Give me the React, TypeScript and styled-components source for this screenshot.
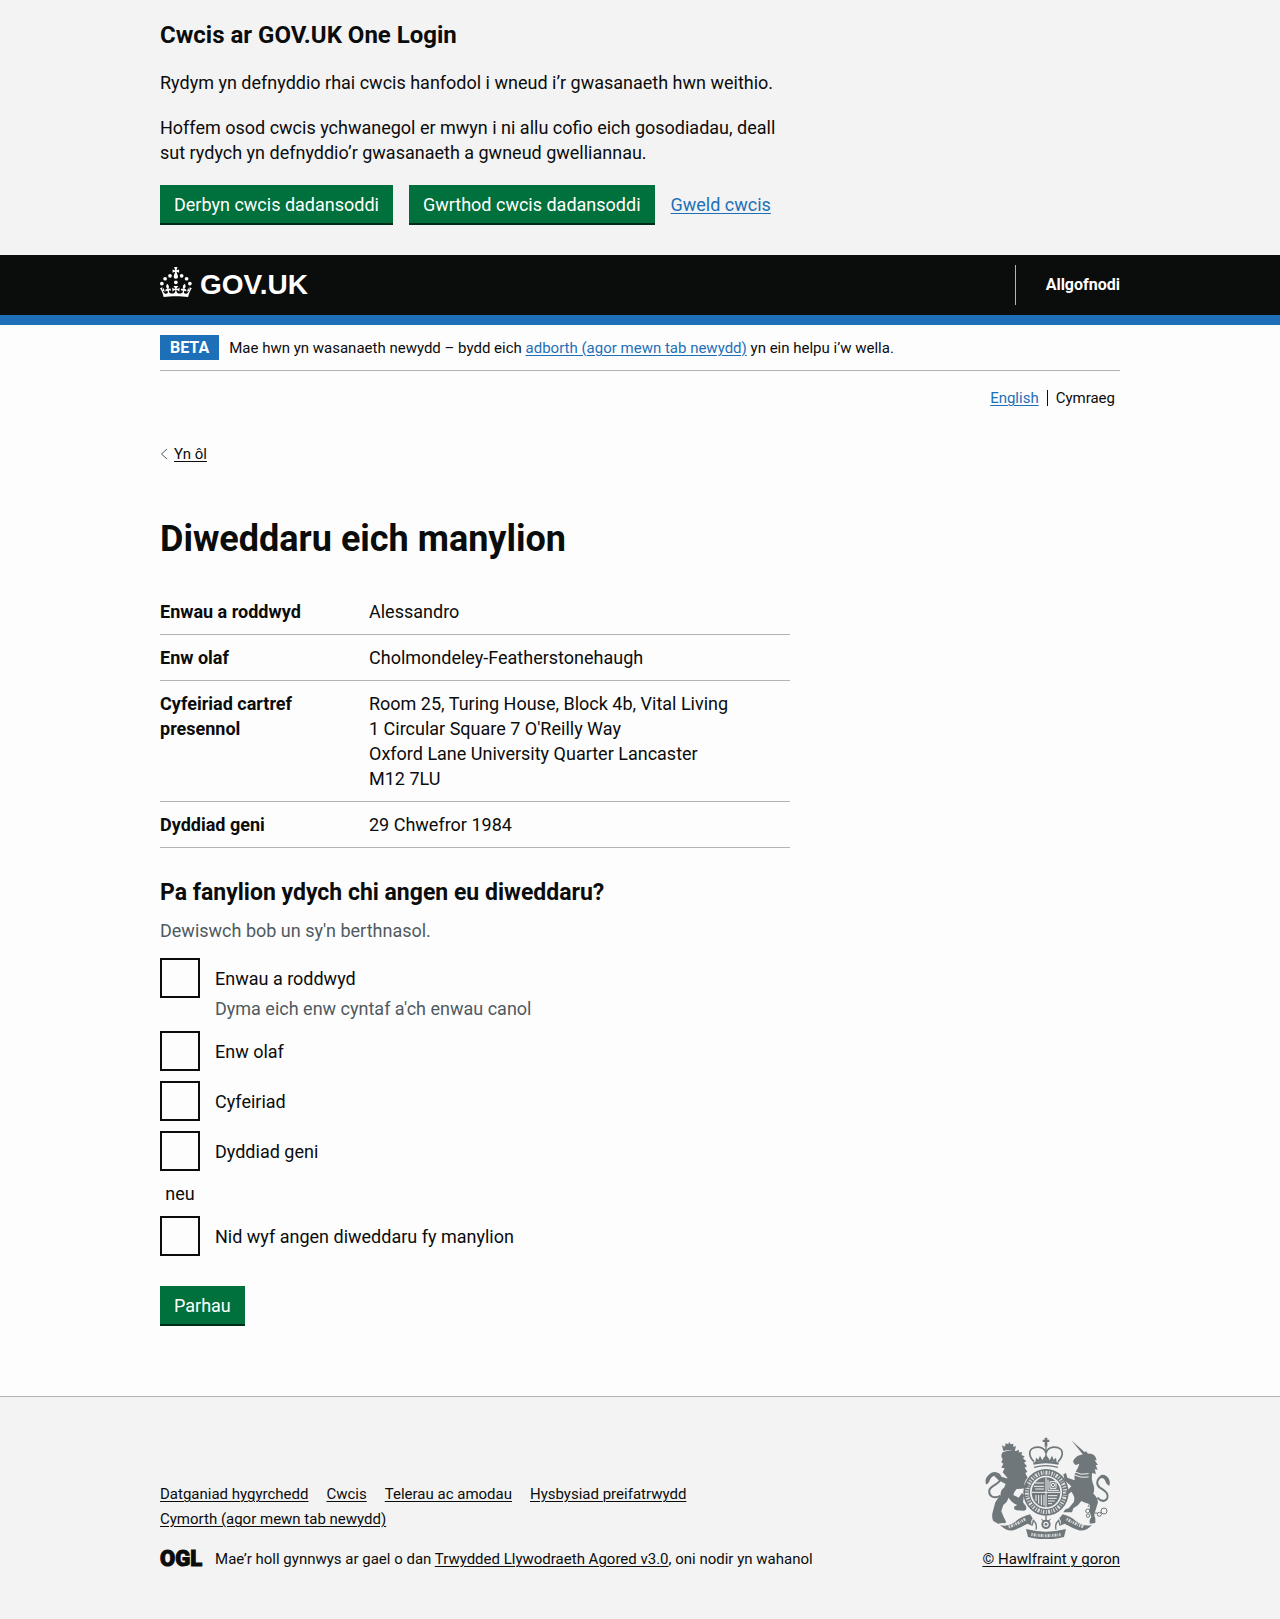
import React from 'react';
import styled, { createGlobalStyle, css } from 'styled-components';

const ink = '#0b0c0c';
const blue = '#1d70b8';
const green = '#00703c';
const rule = '#b1b4b6';
const panel = '#f3f3f3';
const muted = '#505a5f';

const GlobalStyle = createGlobalStyle`
  *, *::before, *::after { box-sizing: border-box; }
  body {
    margin: 0;
    background: #fdfdfd;
    color: ${ink};
    font-family: Roboto, "Liberation Sans", sans-serif;
    font-size: 18px;
    line-height: 25px;
  }
`;

const smallText = css`
  font-size: 15px;
  line-height: 20px;
`;

const underline = css`
  text-decoration: underline;
  text-decoration-thickness: 1px;
  text-underline-offset: 2px;
`;

const Container = styled.div`
  max-width: 960px;
  margin: 0 auto;
`;

const Column = styled.div`
  max-width: 630px;
`;

const Link = styled.a<{ $dark?: boolean }>`
  color: ${(p) => (p.$dark ? ink : blue)};
  ${underline}
`;

const Button = styled.button`
  min-height: 38px;
  padding: 0 14px;
  border: 0;
  margin-bottom: 2px;
  background: ${green};
  box-shadow: 0 2px 0 #002d18;
  color: #fff;
  font: inherit;
  cursor: pointer;
`;

/* Cookie banner */

const CookieBanner = styled.section`
  padding: 20px 0 30px;
  background: ${panel};
`;

const CookieTitle = styled.h2`
  margin: 0 0 20px;
  font-size: 24px;
  line-height: 30px;
`;

const Paragraph = styled.p`
  margin: 0 0 20px;
`;

const ButtonRow = styled.div`
  display: flex;
  align-items: baseline;
  gap: 16px;
`;

/* Header */

const Header = styled.header`
  background: ${ink};
  border-bottom: 10px solid ${blue};
`;

const HeaderRow = styled(Container)`
  display: flex;
  align-items: center;
  justify-content: space-between;
  height: 60px;
`;

const Logo = styled.a`
  display: flex;
  align-items: flex-start;
  gap: 8px;
  color: #fff;
  font: bold 28px/36px "Liberation Sans", Arial, sans-serif;
  text-decoration: none;
`;

const SignOut = styled.nav`
  display: flex;
  align-items: center;
  height: 40px;
  padding-left: 30px;
  border-left: 1px solid ${rule};
`;

const SignOutLink = styled.a`
  color: #fff;
  font-size: 16px;
  line-height: 20px;
  font-weight: 700;
  text-decoration: none;
`;

/* Phase banner and language choice */

const PhaseBanner = styled.div`
  display: flex;
  align-items: center;
  gap: 10px;
  padding: 10px 0;
  border-bottom: 1px solid ${rule};
  ${smallText}
`;

const Tag = styled.strong`
  padding: 0 10px;
  background: ${blue};
  color: #fff;
  font-size: 16px;
  line-height: 25px;
`;

const Languages = styled.ul`
  display: flex;
  justify-content: flex-end;
  align-items: center;
  gap: 8px;
  margin: 0;
  padding: 17px 5px 15px;
  list-style: none;
  ${smallText}
`;

const Language = styled.li`
  display: flex;
  align-items: center;
  gap: 8px;

  & + &::before {
    content: "";
    width: 1px;
    height: 16px;
    background: ${ink};
  }
`;

const BackRow = styled.nav`
  display: flex;
  padding-top: 21px;
`;

const BackLink = styled.a`
  display: flex;
  align-items: center;
  gap: 6px;
  color: ${ink};
  ${underline}
  ${smallText}
`;

/* Main content */

const Main = styled.main`
  padding: 55px 0 70px;
`;

const Title = styled.h1`
  margin: 0 0 30px;
  font-size: 36px;
  line-height: 40px;
`;

const Summary = styled.dl`
  margin: 0 0 30px;
`;

const SummaryRow = styled.div`
  display: grid;
  grid-template-columns: 30% 1fr;
  gap: 20px;
  padding: 10px 0;
  border-bottom: 1px solid ${rule};
`;

const Key = styled.dt`
  font-weight: 700;
`;

const Value = styled.dd`
  margin: 0;
  white-space: pre-line;
`;

const Fieldset = styled.fieldset`
  margin: 0 0 30px;
  padding: 0;
  border: 0;
`;

const Legend = styled.legend`
  margin: 0 0 10px;
  padding: 0;
  font-size: 23px;
  line-height: 30px;
  font-weight: 700;
`;

const Hint = styled.div`
  color: ${muted};
`;

const Options = styled.div`
  display: flex;
  flex-direction: column;
  gap: 10px;
  margin-top: 15px;
`;

const Option = styled.div`
  display: flex;
  gap: 15px;
`;

const Checkbox = styled.input`
  appearance: none;
  flex: none;
  width: 40px;
  height: 40px;
  margin: 0;
  border: 2px solid ${ink};
  background: transparent;
  cursor: pointer;

  &:checked {
    background: ${ink};
    box-shadow: inset 0 0 0 6px #fff;
  }
`;

const OptionText = styled.div`
  display: flex;
  flex-direction: column;
  gap: 5px;
  padding-top: 8px;
`;

const Divider = styled.div`
  width: 40px;
  text-align: center;
`;

/* Footer */

const Footer = styled.footer`
  padding: 40px 0 50px;
  border-top: 1px solid ${rule};
  background: ${panel};
  ${smallText}
`;

const FooterRow = styled(Container)`
  display: flex;
  align-items: flex-end;
  justify-content: space-between;
  gap: 30px;
`;

const FooterLinks = styled.ul`
  display: flex;
  flex-wrap: wrap;
  gap: 5px 18px;
  max-width: 720px;
  margin: 0 0 20px;
  padding: 0;
  list-style: none;
`;

const Licence = styled.div`
  display: flex;
  align-items: center;
  gap: 13px;
`;

const OglMark = styled.span`
  font-weight: 900;
  font-size: 22px;
  line-height: 20px;
  -webkit-text-stroke: 1px ${ink};
`;

const Copyright = styled.a`
  display: flex;
  flex-direction: column;
  align-items: flex-end;
  gap: 10px;
  color: ${ink};
  white-space: nowrap;
  ${underline}

  svg {
    margin-right: 10px;
  }
`;

const Crown = () => (
  <svg width="32" height="30" viewBox="0 0 64 60" fill="#fff" aria-hidden="true">
    <circle cx="20" cy="17.6" r="3.7" />
    <circle cx="10.2" cy="23.5" r="3.7" />
    <circle cx="3.7" cy="33.2" r="3.7" />
    <circle cx="31.7" cy="30.6" r="3.7" />
    <circle cx="43.3" cy="17.6" r="3.7" />
    <circle cx="53.2" cy="23.5" r="3.7" />
    <circle cx="59.7" cy="33.2" r="3.7" />
    <path d="M33.1,9.8c.2-.1.3-.3.5-.5l4.6,2.4v-6.8l-4.6,1.5c-.1-.2-.3-.3-.5-.5l1.9-5.9h-6.7l1.9,5.9c-.2.1-.3.3-.5.5l-4.6-1.5v6.8l4.6-2.4c.1.2.3.3.5.5l-2.6,8c-.9,2.8,1.2,5.7,4.1,5.7h0c3,0,5.1-2.9,4.1-5.7l-2.6-8ZM37,37.9s-3.4,3.8-4.1,6.1c2.2,0,4.2-.5,6.4-2.8l-.7,8.5c-2-2.8-4.4-4.1-5.7-3.8.1,3.1.5,6.7,5.8,7.2,3.7.3,6.7-1.5,7-3.8.4-2.6-2-4.3-3.7-1.6-1.4-4.5,2.4-6.1,4.9-3.2-1.9-4.5-1.8-7.7,2.4-10.9,3,4,2.6,7.3-1.2,11.1,2.4-1.3,6.2,0,4,4.6-1.2-2.8-3.7-2.2-4.2.2-.3,1.7.7,3.7,3,4.2,1.9.3,4.7-.9,7-5.9-1.3,0-2.4.7-3.9,1.7l2.4-8c.6,2.3,1.4,3.7,2.2,4.5.6-1.6.5-2.8,0-5.3l5,1.8c-2.6,3.6-5.2,8.7-7.3,17.5-7.4-1.1-15.7-1.7-24.5-1.7h0c-8.8,0-17.1.6-24.5,1.7-2.1-8.9-4.7-13.9-7.3-17.5l5-1.8c-.5,2.5-.6,3.7,0,5.3.8-.8,1.6-2.3,2.2-4.5l2.4,8c-1.5-1-2.6-1.7-3.9-1.7,2.3,5,5.2,6.2,7,5.9,2.3-.4,3.3-2.4,3-4.2-.5-2.4-3-3.1-4.2-.2-2.2-4.6,1.6-6,4-4.6-3.7-3.7-4.2-7.1-1.2-11.1,4.2,3.2,4.3,6.4,2.4,10.9,2.5-2.8,6.3-1.3,4.9,3.2-1.8-2.7-4.1-1-3.7,1.6.3,2.3,3.3,4.1,7,3.8,5.4-.5,5.7-4.2,5.8-7.2-1.3-.2-3.7,1-5.7,3.8l-.7-8.5c2.2,2.3,4.2,2.7,6.4,2.8-.7-2.3-4.1-6.1-4.1-6.1h10.6,0Z" />
  </svg>
);

const Crest = () => (
  <svg width="125" height="102" viewBox="105 170 375 306" fill="#6f777b" stroke="none" aria-hidden="true">
    {/* royal crown */}
    <path d="M284 172h8v6h6v7h-6v14h-8v-14h-6v-7h6z" />
    <g fill="none" stroke="#6f777b" strokeWidth="5">
      <path d="M252 244C236 228 234 208 252 202C270 197 285 204 288 218C291 204 306 197 324 202C342 208 340 228 324 244" />
      <path d="M288 200V246" strokeWidth="4" />
      <path d="M250 250Q288 240 326 250" strokeWidth="7" />
      <path d="M252 261Q288 251 324 261" strokeWidth="4" />
    </g>
    <path d="M256 246l2-14 7 6 5-12 7 14 4-8 7-8 7 8 4 8 7-14 5 12 7-6 2 14q-32-9-64 0z" />
    {/* garter and shield */}
    <ellipse cx="288" cy="336" rx="68" ry="70" />
    <ellipse cx="288" cy="336" rx="57" ry="59" fill="none" stroke="#f3f3f3" strokeWidth="12" strokeDasharray="4 4 2 4 6 4 3 5" opacity=".85" />
    <ellipse cx="288" cy="336" rx="48" ry="50" fill="#f3f3f3" />
    <ellipse cx="288" cy="336" rx="43" ry="45" />
    <g fill="none" stroke="#f3f3f3" strokeWidth="3">
      <path d="M288 292V380M246 336H330M254 308H282M252 318H282M256 326H282M294 298V330M294 330H326M300 304H318V324H300Z" />
      <path d="M258 344V362M266 344V370M274 344V374M282 344V376M294 346H322M294 354H320M294 362H314M294 370H306" />
      <circle cx="309" cy="314" r="5" />
    </g>
    {/* lion */}
    <path d="M160 212l-4-17 9 4 2-10 8 3 2-8 5 8 8-2 0 10 8-3-4 17q-18-7-34-2z" />
    <path d="M158 216Q176 208 198 212L207 208 206 216 217 216 214 224 224 228 219 234 229 243 222 247 231 258 224 262 232 274 226 278 233 292Q224 300 222 318Q214 328 200 326Q192 334 190 344L206 352 216 338 222 344 219 366 228 378Q232 390 222 391L200 390Q188 388 194 378L202 374Q184 366 176 352Q172 366 160 374L154 392 160 408 168 424Q168 430 158 428L144 430 130 422Q124 410 128 396L136 366Q142 352 152 346Q150 330 162 322Q170 308 172 292L158 276 164 264 154 262 160 250 154 246 158 236Q150 226 158 216z" />
    <path d="M176 296L150 288 138 280 132 286 146 300 168 312zM206 306L226 314 236 306 232 322 208 326z" />
    <path d="M152 346C130 358 116 346 118 330C122 314 152 312 152 294C150 276 128 272 116 290" fill="none" stroke="#6f777b" strokeWidth="6" />
    <path d="M108 312Q102 290 122 280Q136 274 140 284Q126 286 120 298Q116 310 108 312z" />
    {/* unicorn */}
    <path d="M364 180L411 222 403 228z" />
    <path d="M370 240Q380 224 400 222L408 212 414 220Q436 218 440 240L434 240 444 254 437 254 443 268 434 267 438 281 426 278Q424 296 428 308Q436 322 430 340Q442 350 444 366L436 392Q430 402 436 414L436 428 420 430Q416 420 424 410L418 392 420 372Q404 368 394 362Q386 376 370 384L366 396 340 396Q344 386 356 384L372 364Q376 348 364 334L352 344 346 338 364 318 344 300 340 282 348 278 352 292 374 300Q370 282 384 262L388 250 378 254Q368 250 370 240z" />
    <path d="M372 274Q392 286 416 280M374 284Q392 294 416 290" fill="none" stroke="#f3f3f3" strokeWidth="3" />
    <path d="M442 352C460 372 480 356 470 338C460 324 438 322 442 304C446 288 462 284 470 300" fill="none" stroke="#6f777b" strokeWidth="6" />
    <path d="M478 316Q484 294 464 284Q450 280 448 292Q462 290 466 302Q470 314 478 316z" />
    <g fill="none" stroke="#6f777b" strokeWidth="3">
      <circle cx="426" cy="350" r="6" />
      <circle cx="413" cy="392" r="6" />
      <circle cx="414" cy="406" r="5" />
      <circle cx="448" cy="402" r="6" />
      <circle cx="462" cy="392" r="9" />
      <path d="M420 398H442M414 380L424 360" />
    </g>
    {/* motto ribbons */}
    <path d="M150 434Q170 442 196 424Q214 408 240 402L248 414Q240 424 246 436L232 430Q208 444 190 450Q170 454 150 434z" />
    <path d="M426 434Q404 440 380 424Q362 408 338 402L328 414Q336 424 330 436L344 430Q368 444 386 450Q408 454 426 434z" />
    <path d="M228 446Q288 462 348 446L342 470Q288 484 234 470z" />
    <path d="M246 436L250 420Q262 430 258 448M330 436L326 420Q314 430 318 448" fill="none" stroke="#6f777b" strokeWidth="4" />
    <g fill="none" stroke="#f3f3f3" strokeWidth="9" strokeDasharray="4 3 6 3 2 3" opacity=".8">
      <path d="M176 440Q204 430 226 416" />
      <path d="M350 416Q374 430 402 440" />
      <path d="M244 462Q288 470 334 462" />
    </g>
    {/* plant badge */}
    <circle cx="288" cy="432" r="11" fill="none" stroke="#6f777b" strokeWidth="6" />
    <circle cx="288" cy="432" r="4" />
    <path d="M286 406h4v16h-4zM272 414l12 8-4 4zM304 414l-12 8 4 4z" />
  </svg>
);

const details = [
  { key: 'Enwau a roddwyd', value: 'Alessandro' },
  { key: 'Enw olaf', value: 'Cholmondeley-Featherstonehaugh' },
  {
    key: 'Cyfeiriad cartref presennol',
    value:
      "Room 25, Turing House, Block 4b, Vital Living\n1 Circular Square 7 O'Reilly Way\nOxford Lane University Quarter Lancaster\nM12 7LU",
  },
  { key: 'Dyddiad geni', value: '29 Chwefror 1984' },
];

const options = [
  { id: 'given-names', label: 'Enwau a roddwyd', hint: "Dyma eich enw cyntaf a'ch enwau canol" },
  { id: 'last-name', label: 'Enw olaf' },
  { id: 'address', label: 'Cyfeiriad' },
  { id: 'birth-date', label: 'Dyddiad geni' },
];

const footerLinks = [
  'Datganiad hygyrchedd',
  'Cwcis',
  'Telerau ac amodau',
  'Hysbysiad preifatrwydd',
  'Cymorth (agor mewn tab newydd)',
];

function CheckboxOption({ id, label, hint }: { id: string; label: string; hint?: string }) {
  return (
    <Option>
      <Checkbox type="checkbox" id={id} name="details" aria-describedby={hint ? `${id}-hint` : undefined} />
      <OptionText>
        <label htmlFor={id}>{label}</label>
        {hint && <Hint id={`${id}-hint`}>{hint}</Hint>}
      </OptionText>
    </Option>
  );
}

export default function App() {
  return (
    <>
      <GlobalStyle />
      <CookieBanner>
        <Container>
          <Column>
            <CookieTitle>Cwcis ar GOV.UK One Login</CookieTitle>
            <Paragraph>Rydym yn defnyddio rhai cwcis hanfodol i wneud i’r gwasanaeth hwn weithio.</Paragraph>
            <Paragraph>
              Hoffem osod cwcis ychwanegol er mwyn i ni allu cofio eich gosodiadau, deall sut rydych yn
              defnyddio’r gwasanaeth a gwneud gwelliannau.
            </Paragraph>
          </Column>
          <ButtonRow>
            <Button type="button">Derbyn cwcis dadansoddi</Button>
            <Button type="button">Gwrthod cwcis dadansoddi</Button>
            <Link href="#cwcis">Gweld cwcis</Link>
          </ButtonRow>
        </Container>
      </CookieBanner>

      <Header>
        <HeaderRow>
          <Logo href="#hafan">
            <Crown />
            GOV.UK
          </Logo>
          <SignOut>
            <SignOutLink href="#allgofnodi">Allgofnodi</SignOutLink>
          </SignOut>
        </HeaderRow>
      </Header>

      <Container>
        <PhaseBanner>
          <Tag>BETA</Tag>
          <span>
            Mae hwn yn wasanaeth newydd – bydd eich <Link href="#adborth">adborth (agor mewn tab newydd)</Link>{' '}
            yn ein helpu i’w wella.
          </span>
        </PhaseBanner>
        <nav>
          <Languages>
            <Language>
              <Link href="#en">English</Link>
            </Language>
            <Language>Cymraeg</Language>
          </Languages>
        </nav>
        <BackRow>
          <BackLink href="#yn-ol">
            <svg width="8" height="12" viewBox="0 0 8 12" fill="none" stroke={muted} aria-hidden="true">
              <path d="M7 1L1.5 6L7 11" />
            </svg>
            Yn ôl
          </BackLink>
        </BackRow>

        <Main>
          <Column>
            <Title>Diweddaru eich manylion</Title>
            <Summary>
              {details.map((d) => (
                <SummaryRow key={d.key}>
                  <Key>{d.key}</Key>
                  <Value>{d.value}</Value>
                </SummaryRow>
              ))}
            </Summary>
            <form>
              <Fieldset>
                <Legend>Pa fanylion ydych chi angen eu diweddaru?</Legend>
                <Hint>Dewiswch bob un sy'n berthnasol.</Hint>
                <Options>
                  {options.map((o) => (
                    <CheckboxOption key={o.id} {...o} />
                  ))}
                  <Divider>neu</Divider>
                  <CheckboxOption id="none" label="Nid wyf angen diweddaru fy manylion" />
                </Options>
              </Fieldset>
              <Button type="button">Parhau</Button>
            </form>
          </Column>
        </Main>
      </Container>

      <Footer>
        <FooterRow>
          <div>
            <FooterLinks>
              {footerLinks.map((text) => (
                <li key={text}>
                  <Link $dark href="#troedyn">
                    {text}
                  </Link>
                </li>
              ))}
            </FooterLinks>
            <Licence>
              <OglMark>OGL</OglMark>
              <span>
                Mae’r holl gynnwys ar gael o dan{' '}
                <Link $dark href="#trwydded">
                  Trwydded Llywodraeth Agored v3.0
                </Link>
                , oni nodir yn wahanol
              </span>
            </Licence>
          </div>
          <Copyright href="#hawlfraint">
            <Crest />
            © Hawlfraint y goron
          </Copyright>
        </FooterRow>
      </Footer>
    </>
  );
}
